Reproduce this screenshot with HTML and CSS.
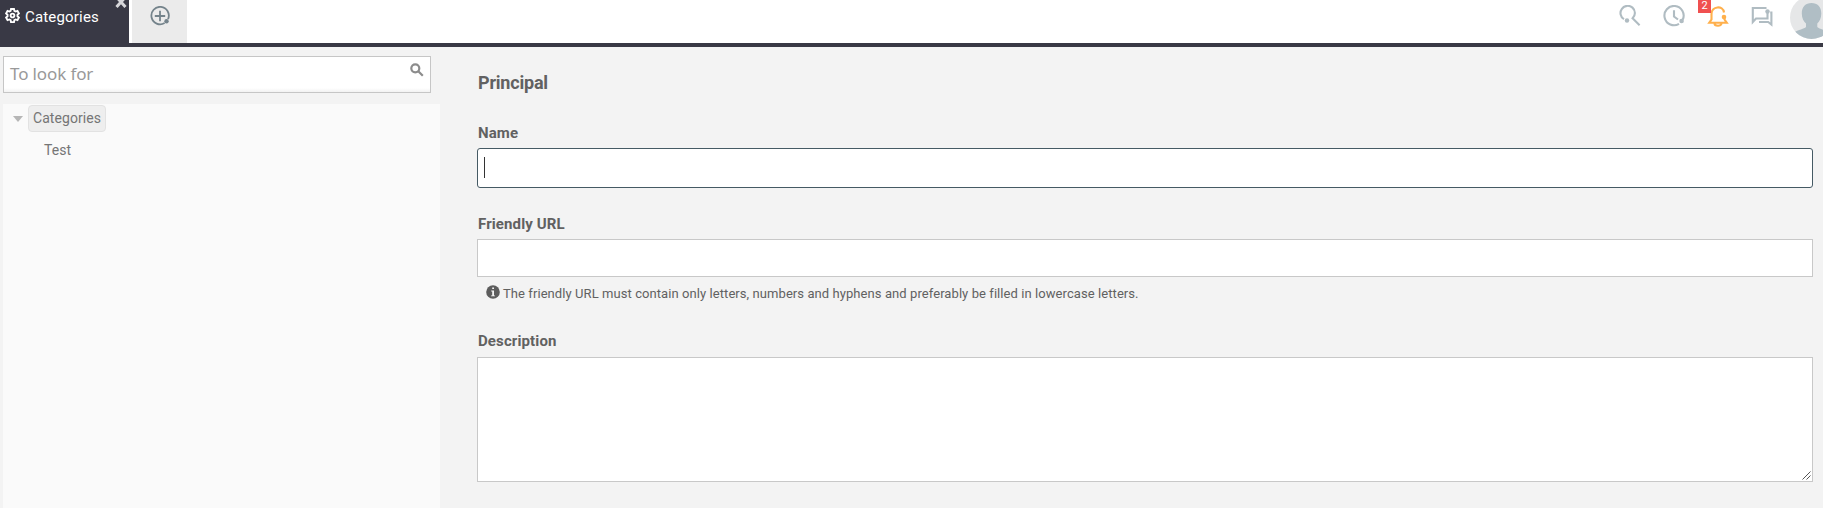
FILE: index.html
```html
<!DOCTYPE html>
<html lang="en">
<head>
<meta charset="utf-8">
<title>Categories</title>
<link rel="stylesheet" href="styles.css">
</head>
<body>
<header class="topbar">
  <div class="tab tab-active">
    <svg class="gear" viewBox="0 0 16 16"><path d="M6.4 1h3.2l.4 2 1.300.8 2-.7 1.500 2.700-1.500 1.400v1.600l1.500 1.400-1.500 2.700-2-.7-1.300.8-.4 2H6.400l-.4-2-1.300-.8-2 .7-1.500-2.700 1.500-1.400V7.200L1.200 5.800l1.500-2.700 2 .7L6 3z"/><circle cx="8" cy="8" r="2"/></svg>
    <span class="tab-title">Categories</span>
    <svg class="close" viewBox="0 0 12 12"><path d="M1.500 1l9 10M10.500 1l-9 10"/></svg>
  </div>
  <div class="tab tab-new">
    <svg class="plus" viewBox="0 0 20 20"><path d="M14.600 17A8.700 8.700 0 1 1 18 13.200M10 4.800v10.400M4.800 10h10.400"/><circle class="dot" cx="16.500" cy="15.200" r="2.200"/></svg>
  </div>
  <nav class="tools">
    <svg class="tool" viewBox="0 0 22 22"><path d="M5 14.200A7.200 7.200 0 1 1 13.600 13.300l7 7"/><circle class="dot" cx="8" cy="15.500" r="2.200"/></svg>
    <svg class="tool" viewBox="0 0 22 22"><path d="M16 18.800A9.600 9.600 0 1 1 19.800 14.500M11 5.300v6.200l4 3"/><circle class="dot" cx="18.600" cy="16" r="2.300"/></svg>
    <div class="alerts">
      <svg class="tool bell" viewBox="0 0 22 22"><path d="M4.500 13V9c0-8 11.500-9 12.500-1.500M4.500 12.500v2l-2.300 3.300h17.600l-2.300-3.300V13M7.500 18.500a3.500 2.200 0 0 0 7 0"/><circle class="dot" cx="17" cy="12" r="2.300"/></svg>
      <span class="badge">2</span>
    </div>
    <svg class="tool" viewBox="0 0 22 22"><path d="M15.500 3H1.800v14L5 13.500h11.500V8M19.200 7.500h1.200v12l-3.200-2.500H8"/><circle class="dot" cx="16.500" cy="6.500" r="2.200"/></svg>
    <svg class="avatar" viewBox="0 0 43 43"><clipPath id="face"><circle cx="21.500" cy="21.500" r="21.500"/></clipPath><g clip-path="url(#face)"><path class="backdrop" d="M0 0h43v43H0z"/><path class="person" d="M21.500 7c6 0 9.800 4 9.800 10.500 0 4.500-1.800 8-4 10V31c2 2 7 2.500 13 6v6H3v-6c6-3.500 11-4 13-6v-3.500c-2.400-2-4.200-5.500-4.200-10C11.800 11 15.500 7 21.500 7z"/></g></svg>
  </nav>
</header>
<div class="page">
  <aside class="sidebar">
    <div class="search">
      <span class="placeholder">To look for</span>
      <svg class="lens" viewBox="0 0 14 14"><circle cx="5.300" cy="5.300" r="4"/><path d="M8.300 8.300l4.500 4.500"/></svg>
    </div>
    <div class="tree">
      <div class="node"><span class="arrow"></span><span class="node-label selected">Categories</span></div>
      <div class="node child"><span class="node-label">Test</span></div>
    </div>
  </aside>
  <main class="form">
    <h1 class="title">Principal</h1>
    <div class="label">Name</div>
    <div class="field focused"><span class="caret"></span></div>
    <div class="label label-url">Friendly URL</div>
    <div class="field"></div>
    <div class="help">
      <svg class="info" viewBox="0 0 14 14"><circle cx="7" cy="7" r="6.800"/><path d="M6.200 2.500H8V4H6.200zM5.200 5.500H8v4.900h1v.9H5v-.9h1.200V6.400h-1z"/></svg>
      <span>The friendly URL must contain only letters, numbers and hyphens and preferably be filled in lowercase letters.</span>
    </div>
    <div class="label label-description">Description</div>
    <div class="field area"><svg class="grip" viewBox="0 0 9 9"><path d="M.5 8.500l8-8M4.500 8.500l4-4"/></svg></div>
  </main>
</div>
</body>
</html>
```
FILE: styles.css
```css
* { box-sizing: border-box; }
body {
  margin: 0;
  height: 508px;
  overflow: hidden;
  background: #f3f3f3;
  color: #616161;
  font-family: Roboto, sans-serif;
}
svg { display: block; flex: none; fill: none; }
.topbar {
  display: flex;
  height: 47px;
  background: #fff;
  border-bottom: 4px solid #393945;
}
.tab { display: flex; height: 43px; }
.tab-active {
  width: 129px;
  padding-left: 5px;
  background: #393945;
  color: #fff;
}
.gear { width: 15px; height: 15px; margin-top: 8px; stroke: #fff; stroke-width: 2; }
.tab-title { width: 74px; margin-left: 5px; font-size: 15px; line-height: 34px; letter-spacing: .18px; }
.close { width: 12px; height: 12px; margin: -4px 0 0 16px; stroke: #d6d6d9; stroke-width: 3; }
.tab-new { width: 55px; margin-left: 3px; padding: 6px 0 0 18px; background: #ebebeb; }
.plus { width: 20px; height: 20px; stroke: #74838b; stroke-width: 1.8; }
.plus .dot { fill: #74838b; stroke: none; }
.tools { display: flex; margin-left: auto; margin-right: -10px; }
.tool { width: 22px; height: 22px; margin: 5px 22px 0 0; stroke: #b0bcc2; stroke-width: 2.1; }
.tool .dot { fill: #b0bcc2; stroke: none; }
.alerts { position: relative; }
.bell { stroke: #ffb04c; }
.bell .dot { fill: #ffb04c; }
.badge {
  position: absolute;
  left: -9px;
  top: -1px;
  width: 13px;
  height: 14px;
  background: #f05050;
  color: #fff;
  font-size: 11px;
  line-height: 14px;
  text-align: center;
}
.avatar { width: 43px; height: 43px; margin-top: -4px; margin-left: -5px; }
.backdrop { fill: #e6e7e8; }
.person { fill: #b0bec5; }
.page { display: flex; height: 461px; }
.sidebar { display: flex; flex-direction: column; width: 440px; padding: 9px 0 0 3px; }
.search {
  display: flex;
  justify-content: space-between;
  width: 428px;
  height: 37px;
  padding: 0 6px;
  border: 1px solid #c6c6c6;
  background: linear-gradient(#fff 31px, #f2f2f2);
}
.placeholder { color: #999; font: 17px/34px "Noto Sans", sans-serif; letter-spacing: -.12px; }
.lens { width: 14px; height: 14px; margin-top: 6px; stroke: #8c8c8c; stroke-width: 2.2; }
.tree { flex: 1; margin-top: 11px; padding-top: 1px; background: #fafafa; }
.node { display: flex; align-items: center; height: 27px; margin-bottom: 5px; padding-left: 10px; }
.arrow {
  margin: 1px 4px 0 0;
  border: 5.5px solid transparent;
  border-top: 6px solid #b6b6b6;
  border-bottom: 0;
}
.node-label { color: #757575; font-size: 14px; line-height: 25px; letter-spacing: .06px; }
.selected { margin-left: 1px; padding: 0 4px; border: 1px solid #e2e2e2; border-radius: 4px; background: #eee; }
.child { padding-left: 41px; }
.form { display: flex; flex-direction: column; width: 1336px; margin-left: 37px; }
.title { margin: 24px 0 0 1px; font-size: 18px; font-weight: 700; line-height: 24px; letter-spacing: -.2px; }
.label { margin: 28px 0 5px 1px; font-size: 15px; font-weight: 700; line-height: 20px; letter-spacing: .12px; }
.field { position: relative; height: 38px; border: 1px solid #c8c8c8; background: #fff; }
.focused { height: 40px; padding: 8px 0 0 6px; border-color: #455a64; border-radius: 3px; }
.caret { display: block; width: 1px; height: 21px; background: #333; }
.label-url { margin-top: 26px; }
.help { display: flex; height: 20px; margin: 6px 0 0 9px; font-size: 13px; line-height: 22px; letter-spacing: .075px; }
.info { width: 14px; height: 14px; margin: 2px 3px 0 0; }
.info circle { fill: #5c5c5c; }
.info path { fill: #f2f2f2; }
.label-description { margin: 28px 0 6px 1px; }
.area { height: 125px; }
.grip { position: absolute; right: 1px; bottom: 1px; width: 9px; height: 9px; stroke: #555; stroke-width: 1; }
```
